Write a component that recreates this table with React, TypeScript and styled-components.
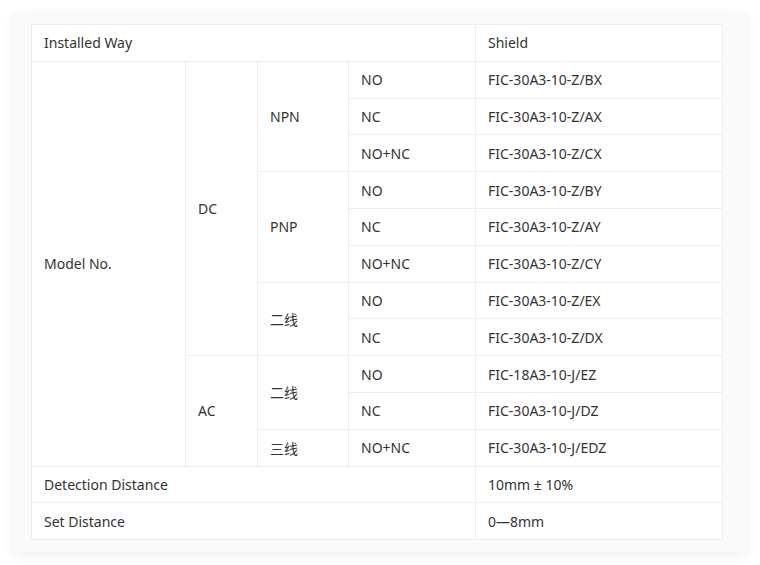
import React from 'react';
import styled, { createGlobalStyle } from 'styled-components';

const GlobalStyle = createGlobalStyle`
  html, body {
    margin: 0;
    padding: 0;
    background: #ffffff;
  }
  body {
    font-family: "Noto Sans", "Noto Sans CJK SC", sans-serif;
  }
`;

const Page = styled.div`
  padding: 14px 14px 14px 14px;
`;

const Card = styled.div`
  width: 732px;
  box-sizing: border-box;
  background: #fafafa;
  padding: 10px 24px 12px 17px;
  box-shadow: 0 2px 12px rgba(0, 0, 0, 0.08);
`;

const Table = styled.table`
  width: 691px;
  border-collapse: collapse;
  background: #ffffff;
  table-layout: fixed;
  font-size: 14px;
  color: #333333;
`;

const Row = styled.tr`
  height: 36.8px;
`;

const Cell = styled.td`
  border: 1px solid #ebeef5;
  padding: 0 12px;
  text-align: left;
  vertical-align: middle;
  white-space: nowrap;
  font-family: "Noto Sans", "Noto Sans CJK SC", sans-serif;
`;

type Line = { mode: string; code: string };

const rows: { top?: React.ReactNode; wire?: { label: string; span: number }; line: Line }[] = [];

function App() {
  return (
    <Page>
      <GlobalStyle />
      <Card>
        <Table>
          <colgroup>
            <col style={{ width: 154 }} />
            <col style={{ width: 72 }} />
            <col style={{ width: 91 }} />
            <col style={{ width: 127 }} />
            <col style={{ width: 247 }} />
          </colgroup>
          <tbody>
            <Row>
              <Cell colSpan={4}>Installed Way</Cell>
              <Cell>Shield</Cell>
            </Row>
            <Row>
              <Cell rowSpan={11}>Model No.</Cell>
              <Cell rowSpan={8}>DC</Cell>
              <Cell rowSpan={3}>NPN</Cell>
              <Cell>NO</Cell>
              <Cell>FIC-30A3-10-Z/BX</Cell>
            </Row>
            <Row>
              <Cell>NC</Cell>
              <Cell>FIC-30A3-10-Z/AX</Cell>
            </Row>
            <Row>
              <Cell>NO+NC</Cell>
              <Cell>FIC-30A3-10-Z/CX</Cell>
            </Row>
            <Row>
              <Cell rowSpan={3}>PNP</Cell>
              <Cell>NO</Cell>
              <Cell>FIC-30A3-10-Z/BY</Cell>
            </Row>
            <Row>
              <Cell>NC</Cell>
              <Cell>FIC-30A3-10-Z/AY</Cell>
            </Row>
            <Row>
              <Cell>NO+NC</Cell>
              <Cell>FIC-30A3-10-Z/CY</Cell>
            </Row>
            <Row>
              <Cell rowSpan={2}>二线</Cell>
              <Cell>NO</Cell>
              <Cell>FIC-30A3-10-Z/EX</Cell>
            </Row>
            <Row>
              <Cell>NC</Cell>
              <Cell>FIC-30A3-10-Z/DX</Cell>
            </Row>
            <Row>
              <Cell rowSpan={3}>AC</Cell>
              <Cell rowSpan={2}>二线</Cell>
              <Cell>NO</Cell>
              <Cell>FIC-18A3-10-J/EZ</Cell>
            </Row>
            <Row>
              <Cell>NC</Cell>
              <Cell>FIC-30A3-10-J/DZ</Cell>
            </Row>
            <Row>
              <Cell>三线</Cell>
              <Cell>NO+NC</Cell>
              <Cell>FIC-30A3-10-J/EDZ</Cell>
            </Row>
            <Row>
              <Cell colSpan={4}>Detection Distance</Cell>
              <Cell>10mm ± 10%</Cell>
            </Row>
            <Row>
              <Cell colSpan={4}>Set Distance</Cell>
              <Cell>0—8mm</Cell>
            </Row>
          </tbody>
        </Table>
      </Card>
    </Page>
  );
}

export default App;
